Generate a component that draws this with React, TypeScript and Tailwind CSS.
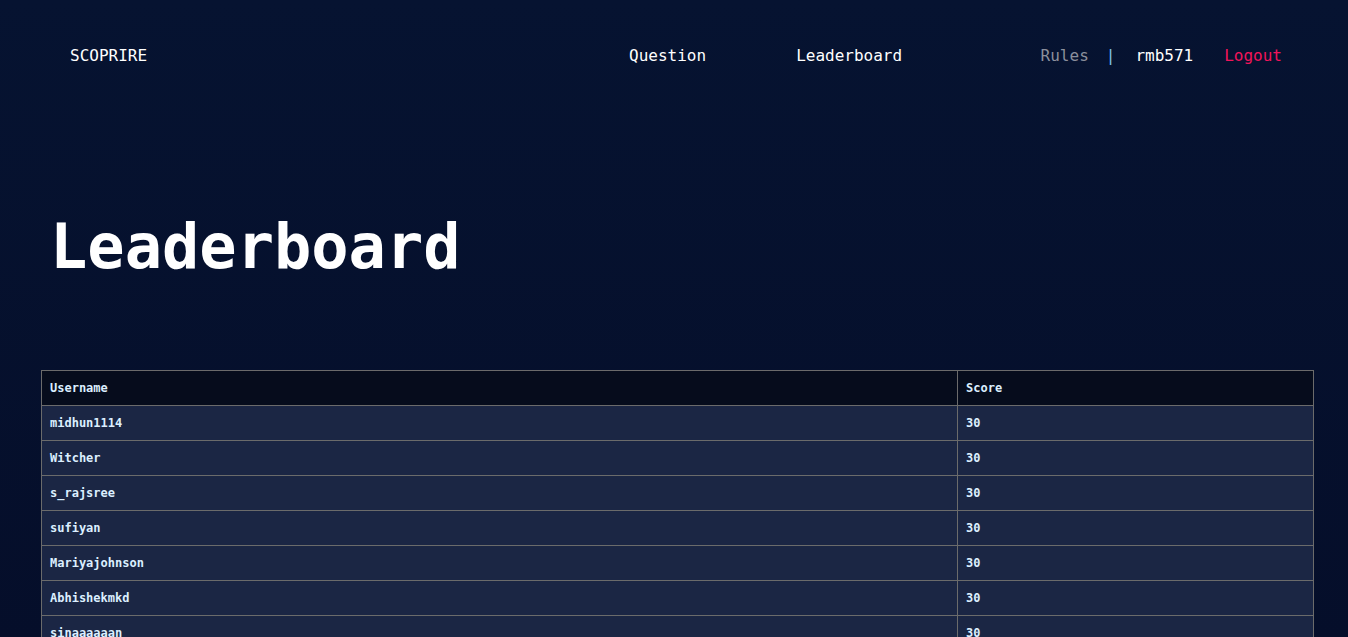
import React from 'react';

const rows = [
  { user: 'midhun1114', score: 30 },
  { user: 'Witcher', score: 30 },
  { user: 's_rajsree', score: 30 },
  { user: 'sufiyan', score: 30 },
  { user: 'Mariyajohnson', score: 30 },
  { user: 'Abhishekmkd', score: 30 },
  { user: 'sinaaaaaan', score: 30 },
];

const mono = { fontFamily: '"DejaVu Sans Mono", "Liberation Mono", monospace' };

const App: React.FC = () => {
  return (
    <div
      className="h-screen overflow-hidden bg-gradient-to-b from-[#061331] to-[#050e2a] text-white"
      style={mono}
    >
      {/* Navbar */}
      <nav className="flex items-center h-[112px] pl-[70px] pr-[66px] text-base">
        <span className="text-white">SCOPRIRE</span>
        <div className="flex ml-[482px] gap-[90px]">
          <span>Question</span>
          <span>Leaderboard</span>
        </div>
        <div className="flex items-center ml-auto">
          <span className="text-[#8b8f9c]">Rules</span>
          <span className="text-[#7fc4e8] ml-[17px]">|</span>
          <span className="ml-[20px]">rmb571</span>
          <span className="text-[#f2145a] ml-[31px]">Logout</span>
        </div>
      </nav>

      {/* Title */}
      <h1 className="pl-[50px] pt-[104px] text-[62px] leading-none font-bold">Leaderboard</h1>

      {/* Table */}
      <div className="pl-[41px] pr-[34px] pt-[92px]">
        <table className="w-full border-collapse text-[12px] font-bold text-[#dcefff]">
          <thead>
            <tr className="bg-[#060c1c] h-[35px]">
              <th className="border border-[#6b6b6b] text-left px-[8px] w-[916px] font-bold">Username</th>
              <th className="border border-[#6b6b6b] text-left px-[8px] font-bold">Score</th>
            </tr>
          </thead>
          <tbody>
            {rows.map((r) => (
              <tr key={r.user} className="bg-[#1b2644] h-[35px]">
                <td className="border border-[#6b6b6b] px-[8px]">{r.user}</td>
                <td className="border border-[#6b6b6b] px-[8px]">{r.score}</td>
              </tr>
            ))}
          </tbody>
        </table>
      </div>
    </div>
  );
};

export default App;
